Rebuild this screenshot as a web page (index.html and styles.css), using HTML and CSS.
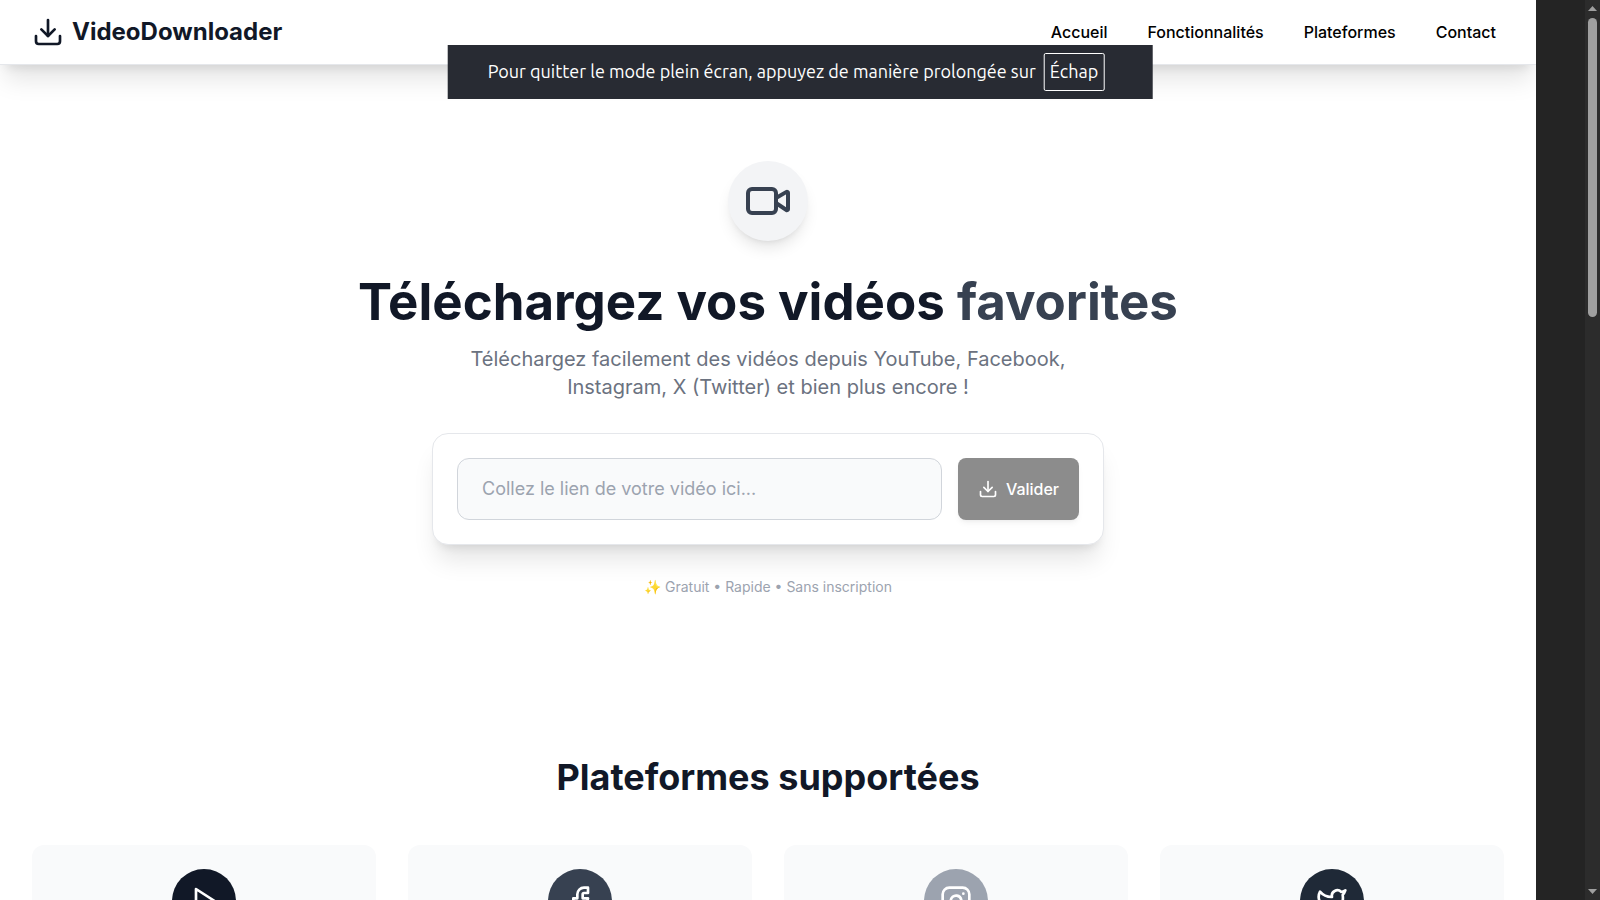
FILE: index.html
```html
<!DOCTYPE html>
<html lang="fr">
<head>
    <meta charset="UTF-8">
    <meta name="viewport" content="width=device-width, initial-scale=1.0">
    <title>VideoDownloader</title>
    <link rel="stylesheet" href="styles.css">
</head>
<body>
    <div class="site">
        <header class="header">
            <div class="logo">
                <svg class="icon icon-logo" viewBox="0 0 24 24"><path d="M21 15v4a2 2 0 0 1-2 2H5a2 2 0 0 1-2-2v-4"/><path d="m7 10 5 5 5-5"/><path d="M12 15V3"/></svg>
                <span>VideoDownloader</span>
            </div>
            <nav class="nav">
                <a href="#accueil">Accueil</a>
                <a href="#fonctionnalites">Fonctionnalités</a>
                <a href="#plateformes">Plateformes</a>
                <a href="#contact">Contact</a>
            </nav>
        </header>

        <main>
            <section class="hero" id="accueil">
                <div class="hero-badge">
                    <svg class="icon icon-hero" viewBox="0 0 24 24"><path d="m16 13 5.223 3.482a.5.5 0 0 0 .777-.416V7.87a.5.5 0 0 0-.752-.432L16 10.5"/><rect x="2" y="6" width="14" height="12" rx="2"/></svg>
                </div>
                <h1>Téléchargez vos vidéos <span class="accent">favorites</span></h1>
                <p class="subtitle">Téléchargez facilement des vidéos depuis YouTube, Facebook, Instagram, X (Twitter) et bien plus encore !</p>
                <form class="download-form">
                    <input type="url" id="url" aria-label="Lien de la vidéo" placeholder="Collez le lien de votre vidéo ici...">
                    <button type="submit" disabled>
                        <svg class="icon icon-button" viewBox="0 0 24 24"><path d="M21 15v4a2 2 0 0 1-2 2H5a2 2 0 0 1-2-2v-4"/><path d="m7 10 5 5 5-5"/><path d="M12 15V3"/></svg>
                        Valider
                    </button>
                </form>
                <p class="note">✨ Gratuit • Rapide • Sans inscription</p>
            </section>

            <section class="platforms" id="plateformes">
                <h2>Plateformes supportées</h2>
                <div class="platform-grid">
                    <div class="platform-card">
                        <div class="platform-icon youtube">
                            <svg class="icon" viewBox="0 0 24 24"><polygon points="6 3 20 12 6 21 6 3"/></svg>
                        </div>
                    </div>
                    <div class="platform-card">
                        <div class="platform-icon facebook">
                            <svg class="icon" viewBox="0 0 24 24"><path d="M18 2h-3a5 5 0 0 0-5 5v3H7v4h3v8h4v-8h3l1-4h-4V7a1 1 0 0 1 1-1h3z"/></svg>
                        </div>
                    </div>
                    <div class="platform-card">
                        <div class="platform-icon instagram">
                            <svg class="icon" viewBox="0 0 24 24"><rect x="2" y="2" width="20" height="20" rx="5"/><path d="M16 11.37A4 4 0 1 1 12.63 8 4 4 0 0 1 16 11.37z"/><path d="M17.5 6.5h.01"/></svg>
                        </div>
                    </div>
                    <div class="platform-card">
                        <div class="platform-icon twitter">
                            <svg class="icon" viewBox="0 0 24 24"><path d="M22 4s-.7 2.1-2 3.4c1.6 10-9.4 17.3-18 11.6 2.2.1 4.4-.6 6-2C3 15.5.5 9.6 3 5c2.2 2.6 5.6 4.1 9 4-.9-4.2 4-6.6 7-3.8 1.1 0 3-1.2 3-1.2z"/></svg>
                        </div>
                    </div>
                </div>
            </section>
        </main>
    </div>

    <div class="fullscreen-notice">
        Pour quitter le mode plein écran, appuyez de manière prolongée sur <kbd>Échap</kbd>
    </div>

    <div class="scrollbar">
        <svg class="arrow" viewBox="0 0 9 5"><path d="M0 5 4.500 0 9 5z"/></svg>
        <div class="track"><div class="thumb"></div></div>
        <svg class="arrow" viewBox="0 0 9 5"><path d="M0 0 4.500 5 9 0z"/></svg>
    </div>
</body>
</html>
```
FILE: styles.css
```css
* {
    box-sizing: border-box;
}

body {
    font-family: Inter, sans-serif;
    font-size: 16px;
    line-height: 24px;
    background-color: #242424;
    color: #111827;
    margin: 0;
    padding-right: 64px;
    height: 100vh;
    overflow: hidden;
}

h1,
h2,
p {
    margin: 0;
}

.site {
    background-color: #fff;
    min-height: 100vh;
    overflow: hidden;
}

.icon {
    width: 32px;
    height: 32px;
    fill: none;
    stroke: currentColor;
    stroke-width: 2;
    stroke-linecap: round;
    stroke-linejoin: round;
}

.header {
    display: flex;
    justify-content: space-between;
    align-items: center;
    height: 65px;
    padding: 0 32px;
    border-bottom: 1px solid #e5e7eb;
    box-shadow: 0 20px 25px -5px rgba(0, 0, 0, 0.1), 0 8px 10px -6px rgba(0, 0, 0, 0.1);
}

.logo {
    display: flex;
    align-items: center;
    gap: 8px;
    font-size: 24px;
    font-weight: 700;
    line-height: 32px;
}

.nav {
    display: flex;
    gap: 24px;
}

.nav a {
    padding: 8px;
    color: #000;
    font-weight: 500;
    text-decoration: none;
}

.hero {
    display: flex;
    flex-direction: column;
    align-items: center;
    padding: 96px 32px;
    text-align: center;
}

.hero-badge {
    display: flex;
    align-items: center;
    justify-content: center;
    width: 80px;
    height: 80px;
    margin-bottom: 32px;
    border-radius: 50%;
    background-color: #f3f4f6;
    color: #374151;
    box-shadow: 0 10px 15px -3px rgba(0, 0, 0, 0.1), 0 4px 6px -4px rgba(0, 0, 0, 0.1);
}

.icon-hero {
    width: 48px;
    height: 48px;
}

h1 {
    margin-bottom: 14px;
    font-size: 51px;
    font-weight: 700;
    line-height: 58px;
}

.accent {
    color: #374151;
}

.subtitle {
    max-width: 672px;
    margin-bottom: 32px;
    color: #6b7280;
    font-size: 20px;
    line-height: 28px;
}

.download-form {
    display: flex;
    gap: 16px;
    width: 100%;
    max-width: 672px;
    margin-bottom: 32px;
    padding: 24px;
    border: 1px solid #e5e7eb;
    border-radius: 16px;
    background-color: #fff;
    box-shadow: 0 20px 25px -5px rgba(0, 0, 0, 0.1), 0 8px 10px -6px rgba(0, 0, 0, 0.1);
}

.download-form input {
    flex: 1;
    min-width: 0;
    height: 62px;
    padding: 15px 24px 17px;
    border: 1px solid #d1d5db;
    border-radius: 12px;
    background-color: #f9fafb;
    font-family: inherit;
    font-size: 18px;
}

.download-form input::placeholder {
    color: #9ca3af;
}

.download-form button {
    display: flex;
    align-items: center;
    gap: 8px;
    padding: 0 20px;
    border: none;
    border-radius: 8px;
    background-color: #8c8c8c;
    color: #fff;
    font-family: inherit;
    font-size: 16px;
    font-weight: 500;
    box-shadow: 0 4px 6px -1px rgba(0, 0, 0, 0.05), 0 2px 4px -2px rgba(0, 0, 0, 0.05);
}

.icon-button {
    width: 20px;
    height: 20px;
}

.note {
    color: #9ca3af;
    font-size: 14px;
    line-height: 20px;
}

.platforms {
    padding: 64px 32px;
}

h2 {
    margin-bottom: 48px;
    font-size: 36px;
    font-weight: 700;
    line-height: 40px;
    text-align: center;
}

.platform-grid {
    display: grid;
    grid-template-columns: repeat(4, 1fr);
    gap: 32px;
}

.platform-card {
    display: flex;
    justify-content: center;
    padding: 24px;
    border-radius: 12px;
    background-color: #f9fafb;
}

.platform-icon {
    display: flex;
    align-items: center;
    justify-content: center;
    width: 64px;
    height: 64px;
    border-radius: 50%;
    color: #fff;
}

.youtube {
    background-color: #111827;
}

.facebook {
    background-color: #374151;
}

.instagram {
    background-color: #9ca3af;
}

.twitter {
    background-color: #1f2937;
}

/* browser overlay shown above the page */
.fullscreen-notice {
    position: absolute;
    top: 45px;
    left: 50%;
    display: flex;
    align-items: baseline;
    gap: 8px;
    padding: 8px 48px 8px 40px;
    background-color: #282b33;
    color: #fff;
    font-family: Ubuntu, "Open Sans", sans-serif;
    font-size: 18px;
    white-space: nowrap;
    transform: translateX(-50%);
}

.fullscreen-notice kbd {
    padding: 5px 5px 7px;
    border: 1px solid #fff;
    border-radius: 2px;
    font-family: inherit;
}

.scrollbar {
    position: absolute;
    top: 0;
    right: 0;
    bottom: 0;
    display: flex;
    flex-direction: column;
    align-items: center;
    gap: 7px;
    width: 15px;
    padding: 6px 0;
    background-color: #2c2c2c;
}

.arrow {
    width: 9px;
    height: 5px;
    fill: #9f9f9f;
}

.track {
    flex: 1;
}

.thumb {
    width: 9px;
    height: 34.6%;
    border-radius: 5px;
    background-color: #9f9f9f;
}
```
